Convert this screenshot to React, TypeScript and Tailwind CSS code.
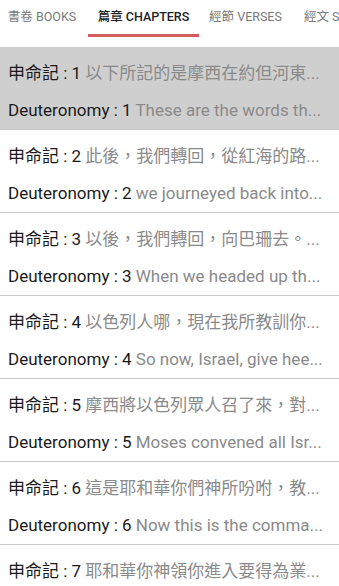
import React from "react";

const rows = [
  { n: 1, zh: "以下所記的是摩西在約但河東...", en: "These are the words th..." },
  { n: 2, zh: "此後，我們轉回，從紅海的路...", en: "we journeyed back into..." },
  { n: 3, zh: "以後，我們轉回，向巴珊去。...", en: "When we headed up th..." },
  { n: 4, zh: "以色列人哪，現在我所教訓你...", en: "So now, Israel, give hee..." },
  { n: 5, zh: "摩西將以色列眾人召了來，對...", en: "Moses convened all Isr..." },
  { n: 6, zh: "這是耶和華你們神所吩咐，教...", en: "Now this is the comma..." },
  { n: 7, zh: "耶和華你神領你進入要得為業...", en: "When the LORD your G..." },
];

const font = { fontFamily: '"Roboto", "Noto Sans CJK TC", sans-serif' };

export default function App() {
  return (
    <div className="w-[339px] h-[586px] overflow-hidden bg-white" style={font}>
      <div className="h-[47px] flex items-start bg-white text-[12.5px] whitespace-nowrap">
        <div className="w-[88px] shrink-0 h-[37px] flex flex-col items-center">
          <div className="mt-[8px] h-[18px] leading-[18px] text-[#7a7a7a] pr-[4px]">書卷 BOOKS</div>
        </div>
        <div className="w-[111px] shrink-0 h-[37px] flex flex-col items-center">
          <div className="mt-[8px] h-[18px] leading-[18px] text-[#222] font-medium">篇章 CHAPTERS</div>
          <div className="mt-auto w-full h-[3px] bg-[#d25c5f]" />
        </div>
        <div className="w-[93px] shrink-0 h-[37px] flex flex-col items-center">
          <div className="mt-[8px] h-[18px] leading-[18px] text-[#7a7a7a]">經節 VERSES</div>
        </div>
        <div className="shrink-0 h-[37px] pl-[12px]">
          <div className="mt-[8px] h-[18px] leading-[18px] text-[#7a7a7a]">經文 SEARCH</div>
        </div>
      </div>
      {rows.map((r, i) => (
        <div
          key={r.n}
          className={
            "h-[83px] border-b border-[#c8c8c8] px-[8px] pt-[16px] flex flex-col gap-[17px] text-[17px] leading-[20px] whitespace-nowrap overflow-hidden " +
            (i === 0 ? "bg-[#cfcfcf]" : "bg-white")
          }
        >
          <div className="overflow-hidden">
            <span className="text-[#1a1a1a]">申命記 : {r.n} </span>
            <span className="text-[#8a8a8a]">{r.zh}</span>
          </div>
          <div className="overflow-hidden">
            <span className="text-[#1a1a1a]">Deuteronomy : {r.n} </span>
            <span className="text-[#8a8a8a]">{r.en}</span>
          </div>
        </div>
      ))}
    </div>
  );
}
